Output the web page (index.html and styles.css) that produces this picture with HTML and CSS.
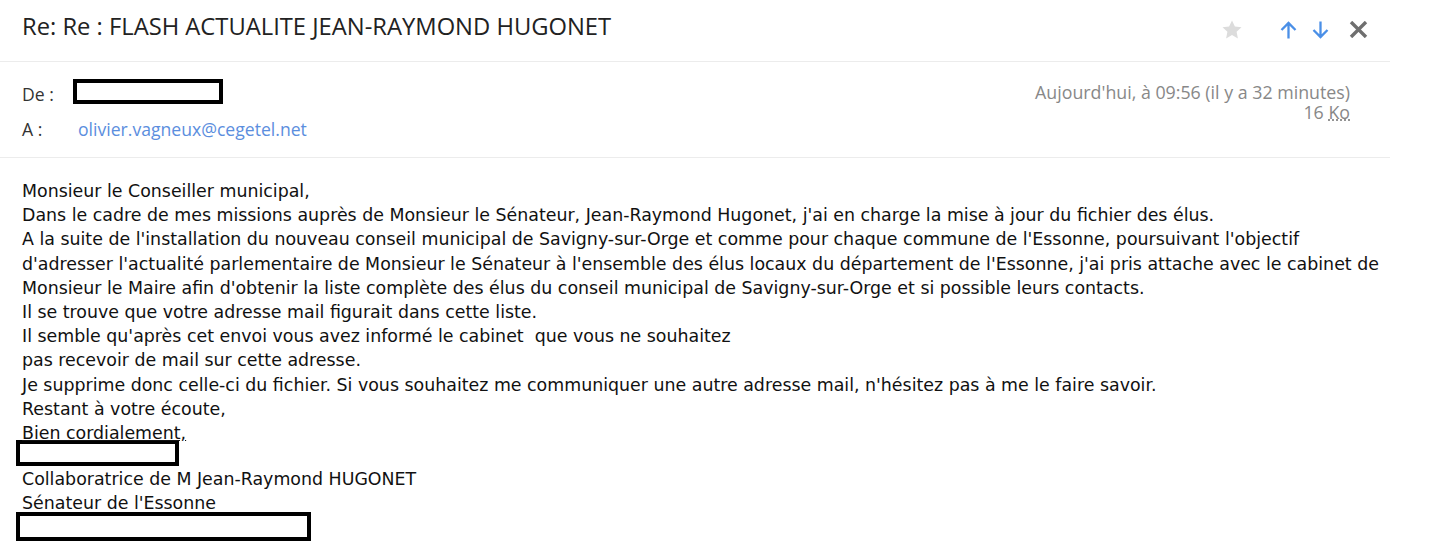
FILE: index.html
```html
<!DOCTYPE html>
<html lang="fr">
<head>
    <meta charset="UTF-8">
    <title>Re: Re : FLASH ACTUALITE JEAN-RAYMOND HUGONET</title>
    <link rel="stylesheet" href="styles.css">
</head>
<body>

    <div class="mail">
        <div class="subject-bar">
            <h1 class="subject">Re: Re : FLASH ACTUALITE JEAN-RAYMOND HUGONET</h1>
            <div class="actions">
                <svg class="star" width="20" height="19" viewBox="0 0 20 19"><path d="M10 0.5l2.9 6 6.6 0.8-4.9 4.5 1.3 6.6L10 15.1l-5.9 3.3 1.3-6.6L0.5 7.3l6.6-0.8z" fill="#dcdcdc"/></svg>
                <svg class="arrow" width="17" height="18" viewBox="0 0 17 18"><path d="M8.5 17.5V2M1.5 9l7-7 7 7" fill="none" stroke="#4a8fe7" stroke-width="2.3"/></svg>
                <svg class="arrow down" width="17" height="18" viewBox="0 0 17 18"><path d="M8.5 0.5V16M1.5 9l7 7 7-7" fill="none" stroke="#4a8fe7" stroke-width="2.3"/></svg>
                <svg class="close" width="19" height="17" viewBox="0 0 19 17"><path d="M2 1l15 15M17 1L2 16" fill="none" stroke="#6f6f6f" stroke-width="3.4"/></svg>
            </div>
        </div>

        <div class="headers">
            <div class="people">
                <div class="row"><span class="label">De :</span><span class="masked masked-from"></span></div>
                <div class="row"><span class="label">A :</span><a class="addr" href="#">olivier.vagneux@cegetel.net</a></div>
            </div>
            <div class="meta">
                <div>Aujourd'hui, à 09:56 (il y a 32 minutes)</div>
                <div>16 <abbr title="Kilo-octets">Ko</abbr></div>
            </div>
        </div>

        <div class="body">
            Monsieur le Conseiller municipal,<br>
            Dans le cadre de mes missions auprès de Monsieur le Sénateur, Jean-Raymond Hugonet, j'ai en charge la mise à jour du fichier des élus.<br>
            A la suite de l'installation du nouveau conseil municipal de Savigny-sur-Orge et comme pour chaque commune de l'Essonne, poursuivant l'objectif<br>
            d'adresser l'actualité parlementaire de Monsieur le Sénateur à l'ensemble des élus locaux du département de l'Essonne, j'ai pris attache avec le cabinet de<br>
            Monsieur le Maire afin d'obtenir la liste complète des élus du conseil municipal de Savigny-sur-Orge et si possible leurs contacts.<br>
            Il se trouve que votre adresse mail figurait dans cette liste.<br>
            Il semble qu'après cet envoi vous avez informé le cabinet &nbsp;que vous ne souhaitez<br>
            pas recevoir de mail sur cette adresse.<br>
            Je supprime donc celle-ci du fichier. Si vous souhaitez me communiquer une autre adresse mail, n'hésitez pas à me le faire savoir.<br>
            Restant à votre écoute,<br>
            <u>Bien cordialement,</u>
            <div class="masked masked-name"></div>
            Collaboratrice de M Jean-Raymond HUGONET<br>
            Sénateur de l'Essonne
            <div class="masked masked-sign"></div>
        </div>
    </div>

</body>
</html>
```

FILE: styles.css
```css
body {
    margin: 0;
    background: #fff;
    font-family: 'Open Sans', sans-serif;
    color: #222;
}

.mail {
    width: 1390px;
}

.subject-bar {
    height: 62px;
    display: flex;
    align-items: center;
    justify-content: space-between;
    padding: 0 22px;
    border-bottom: 1px solid #ececec;
    box-sizing: border-box;
}

.subject {
    margin: 0;
    font-size: 23.75px;
    font-weight: 400;
    color: #222;
    position: relative;
    top: -5px;
}

.actions {
    display: flex;
    align-items: center;
    position: relative;
    top: -1px;
}

.star {
    margin-right: 38px;
}

.arrow.down {
    margin-left: 15px;
}

.close {
    margin-left: 20px;
}

.headers {
    display: flex;
    justify-content: space-between;
    padding: 14px 40px 11px 22px;
    border-bottom: 1px solid #ececec;
}

.row {
    display: flex;
    align-items: center;
    height: 35px;
    font-size: 17.6px;
    color: #333;
}

.label {
    width: 56px;
}

.masked {
    border: 4px solid #000;
    background: #fff;
    box-sizing: border-box;
}

.masked-from {
    width: 150px;
    height: 25px;
    margin-left: -5px;
    position: relative;
    top: -2px;
}

.addr {
    color: #5b8ede;
    text-decoration: none;
}

.meta {
    text-align: right;
    color: #888;
    font-size: 17.8px;
    line-height: 20px;
    padding-top: 6px;
}

.meta abbr {
    text-decoration: underline dotted;
}

.body {
    padding: 21px 22px;
    font-family: 'DejaVu Sans', sans-serif;
    font-size: 17.4px;
    line-height: 24.2px;
    color: #111;
    white-space: nowrap;
}

.masked-name {
    width: 163px;
    height: 26px;
    margin: -5px 0 1px -6px;
}

.masked-sign {
    width: 295px;
    height: 29px;
    margin: -4px 0 0 -6px;
}
```
